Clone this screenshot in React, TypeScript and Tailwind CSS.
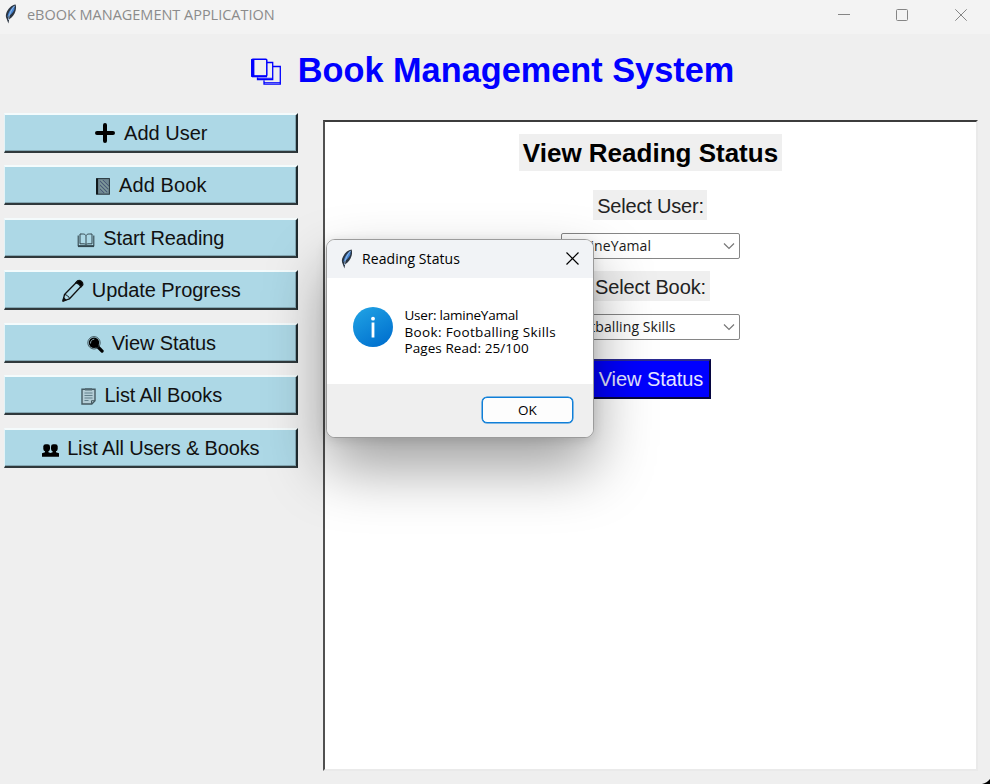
import React from "react";

const ARIAL = "font-['Liberation_Sans',Arial,sans-serif]";
const SEGOE = "font-['Open_Sans','Noto_Sans',sans-serif]";

function Feather({ className }: { className: string }) {
  return (
    <svg viewBox="0 0 12 20" className={className}>
      <path d="M10.6.6C6.500 1 2.700 5.200 1.200 9.500c-.6 2-.4 3.800.4 5.300L3.400 19.400l.8-4.200c3-1.300 5.300-4.700 6.400-8.400.6-2.400.6-4.600 0-6.200Z" fill="#2b3542" />
      <path d="M9.800 1.800C6.600 3.500 3 8 2.400 13.200c3-2 5.800-4.800 6.900-7.400Z" fill="#4585d4" />
      <path d="M9.600 1.800C6.200 5.500 4.200 10 3.400 16" fill="none" stroke="#a9c8ea" strokeWidth=".8" />
    </svg>
  );
}

function BooksIcon() {
  return (
    <svg viewBox="0 0 32 28" className="h-[28px] w-[32px] shrink-0" fill="none" stroke="#0000ff">
      <path d="M17 4.500H22.700V21.700H7.500V19.500M23 8.500H30.300V26.200H14V22.500" strokeWidth="1.300" />
      <path d="M7.500 20.300h15M14 24.700h16" strokeWidth="1" />
      <rect x="1.800" y="1.300" width="15" height="17" rx="1" strokeWidth="1.500" />
      <path d="M2.800 1v18" strokeWidth="3.200" />
      <path d="M2 18.300h15" strokeWidth="2" />
    </svg>
  );
}

function PlusIcon() {
  return (
    <svg viewBox="0 0 20 20" className="h-[20px] w-[20px]">
      <path d="M10 2v16M2 10h16" stroke="#000" strokeWidth="4" strokeLinecap="round" />
    </svg>
  );
}

function NotebookIcon() {
  return (
    <svg viewBox="0 0 14 17" className="mt-[2px] h-[17px] w-[14px]">
      <rect x=".6" y=".6" width="12.800" height="15.600" fill="#6f8792" stroke="#26343a" />
      <path d="M1 .6v15.600" stroke="#10181c" strokeWidth="2.200" />
      <path d="M4 3l8 8M4 7l7 7M7 2l6 6M4 11l4 4" stroke="#4b5b78" strokeWidth="1" />
      <path d="M4 5l8 8M5 2l8 8M4 9l6 6" stroke="#8aa79b" strokeWidth=".6" />
    </svg>
  );
}

function OpenBookIcon() {
  return (
    <svg viewBox="0 0 18 15" className="mt-[5px] h-[15px] w-[18px]" fill="none" stroke="#32464e">
      <path d="M9 2.500C8 1.200 7 1 5.500 1H3V10.800H6c1.500 0 2.500.2 3 .9.500-.7 1.500-.9 3-.9h3V1h-2.500C11 1 10 1.200 9 2.500ZM9 2.500V11.500" strokeWidth="1" />
      <path d="M1.200 2.500V12.800H16.800V2.500" strokeWidth="1.100" />
      <path d="M1 13.300h16" strokeWidth="1.600" />
    </svg>
  );
}

function PencilIcon() {
  return (
    <svg viewBox="0 0 22 23" className="h-[23px] w-[22px]" fill="none" stroke="#111" strokeWidth="1.300" strokeLinejoin="round">
      <path d="M1 22l1.500-6.500L15.500 2.200c1.500-1 4.800 1.600 4.600 4L7.500 19.800Z" />
      <path d="M2.500 15.500c2 .2 4.700 2 5 4.300" strokeWidth="1" />
      <path d="M13.800 3.800l2-2c2-1.400 5.500 1.500 5 4l-2 2.200c-.5-2-3-4-5-4.200Z" fill="#000" />
      <path d="M1 22l.7-3 2.200 2.200Z" fill="#000" />
    </svg>
  );
}

function MagnifierIcon() {
  return (
    <svg viewBox="0 0 17 17" className="mt-[3px] h-[17px] w-[17px]">
      <path d="M10.500 10.500l4.600 4.600" stroke="#000" strokeWidth="3.200" strokeLinecap="round" />
      <circle cx="7" cy="6.800" r="5.200" fill="#000" />
      <circle cx="7" cy="6.800" r="6.200" fill="none" stroke="#26353b" strokeWidth=".8" />
      <path d="M3.500 7.500C3.400 5 5 3.300 7.300 3.200" fill="none" stroke="#8aa5ae" strokeWidth="1" />
    </svg>
  );
}

function ClipboardIcon() {
  return (
    <svg viewBox="0 0 15 18" className="mt-[2px] h-[18px] w-[15px]" fill="none">
      <path d="M1 2.200h13v11.500L10.800 17H1Z" fill="#b4cdd6" stroke="#455a62" strokeWidth="1.400" />
      <path d="M4 1.200h7v2.300H4Z" fill="#536a73" />
      <path d="M3.500 6h8M3.500 8.500h8M3.500 11h8M3.500 13.500h4" stroke="#62808c" strokeWidth="1" />
      <path d="M10.500 17v-3.300H14" stroke="#455a62" strokeWidth="1" />
    </svg>
  );
}

function UsersIcon() {
  return (
    <svg viewBox="0 0 17 13" className="mt-[6px] h-[13px] w-[17px]" fill="#000">
      <rect x="1.300" y=".2" width="6.700" height="7.300" rx="2.400" />
      <rect x="9" y=".2" width="6.700" height="7.300" rx="2.400" />
      <path d="M3 6h3.400v2.300l2.100.7 2.100-.7V6H14v2.300l3 1V12.800H0V9.300l3-1Z" />
    </svg>
  );
}

const ACTIONS: { label: string; icon: React.ReactNode; layout: string; tracking: string }[] = [
  { label: "Add User", icon: <PlusIcon />, layout: "gap-[9px] pl-[2px]", tracking: "tracking-[0px]" },
  { label: "Add Book", icon: <NotebookIcon />, layout: "gap-[9px] pl-[2px]", tracking: "tracking-[0.1px]" },
  { label: "Start Reading", icon: <OpenBookIcon />, layout: "gap-[8px] pl-[1px]", tracking: "tracking-[-0.1px]" },
  { label: "Update Progress", icon: <PencilIcon />, layout: "gap-[8px] pl-[2px]", tracking: "tracking-[-0.08px]" },
  { label: "View Status", icon: <MagnifierIcon />, layout: "gap-[8px] pl-[2px]", tracking: "tracking-[-0.1px]" },
  { label: "List All Books", icon: <ClipboardIcon />, layout: "gap-[9px] pl-[2px]", tracking: "tracking-[-0.1px]" },
  { label: "List All Users & Books", icon: <UsersIcon />, layout: "gap-[8px] pl-[1px]", tracking: "tracking-[-0.15px]" },
];

function Combo({ value }: { value: string }) {
  return (
    <div className={`flex h-[26px] w-[179px] items-center justify-between rounded-[2px] border border-[#868686] bg-white pr-[4px] pl-[4px] text-[14px] text-[#1a1a1a] ${SEGOE}`}>
      <span className="whitespace-nowrap tracking-[0.08px]">{value}</span>
      <svg viewBox="0 0 12 8" className="h-[8px] w-[12px]" fill="none" stroke="#777" strokeWidth="1.200">
        <path d="M1 1.500l5 5 5-5" />
      </svg>
    </div>
  );
}

function MessageBox() {
  return (
    <div className={`absolute top-[239px] left-[326px] flex h-[199px] w-[268px] flex-col overflow-hidden rounded-[9px] border border-[#9b9b9b] bg-white text-black shadow-[0_30px_60px_rgba(0,0,0,0.38),0_2px_12px_rgba(0,0,0,0.12)] ${SEGOE}`}>
      <div className="flex h-[38px] shrink-0 items-center bg-[#f1f3f6] pr-[14px] pb-[1px] pl-[14px]">
        <Feather className="h-[20px] w-[12px]" />
        <span className="ml-[9px] text-[14px] tracking-[0.08px]">Reading Status</span>
        <svg viewBox="0 0 13 13" className="ml-auto h-[13px] w-[13px]" stroke="#000" strokeWidth="1.200">
          <path d="M.5.5l12 12M12.500.5l-12 12" />
        </svg>
      </div>
      <div className="flex h-[106px] shrink-0 items-start pt-[29px] pl-[26px]">
        <svg viewBox="0 0 40 40" className="h-[40px] w-[40px] shrink-0">
          <defs>
            <linearGradient id="info" x1="0" y1="0" x2=".6" y2="1">
              <stop offset="0" stopColor="#22a5e5" />
              <stop offset="1" stopColor="#0273d0" />
            </linearGradient>
          </defs>
          <circle cx="20" cy="20" r="20" fill="url(#info)" />
          <circle cx="20" cy="11.700" r="1.900" fill="#fff" />
          <path d="M20 15.500v15" stroke="#fff" strokeWidth="2.800" />
        </svg>
        <div className="ml-[11.500px] text-[13.500px] leading-[16.500px] whitespace-nowrap">
          <p className="tracking-[-0.23px]">User: lamineYamal</p>
          <p className="tracking-[0.34px]">Book: Footballing Skills</p>
          <p className="tracking-[0.08px]">Pages Read: 25/100</p>
        </div>
      </div>
      <div className="flex grow items-start justify-end bg-[#efefef] pt-[13px] pr-[20px]">
        <div className="flex h-[26px] w-[91px] items-center justify-center rounded-[5px] border border-[#0f7fd8] bg-[#fdfdfd] pt-[1px] text-[13.500px] shadow-[0_0_0_0.5px_#0f7fd8]">OK</div>
      </div>
    </div>
  );
}

export default function App() {
  return (
    <div className={`relative flex h-[784px] w-[990px] flex-col overflow-hidden bg-[#efefef] ${ARIAL}`}>
      <header className={`flex h-[34px] shrink-0 items-start bg-[#f3f3f3] pl-[5px] ${SEGOE}`}>
        <Feather className="mt-[4px] h-[20px] w-[12px]" />
        <span className="ml-[10px] text-[14.500px] leading-[30px] tracking-[-0.020px] text-[#8b8b8b]">eBOOK MANAGEMENT APPLICATION</span>
        <div className="mt-[9px] mr-[23px] ml-auto flex items-center">
          <svg viewBox="0 0 12 12" className="mr-[46px] h-[12px] w-[12px]" stroke="#858585"><path d="M0 5.500h12" /></svg>
          <svg viewBox="0 0 12 12" className="mr-[47px] h-[12px] w-[12px]" stroke="#858585" fill="none"><rect x=".5" y=".5" width="11" height="11" rx="1" /></svg>
          <svg viewBox="0 0 12 12" className="h-[12px] w-[12px]" stroke="#858585"><path d="M.3.300l11.400 11.400M11.700.3L.3 11.700" /></svg>
        </div>
      </header>

      <div className="flex h-[78.700px] shrink-0 items-center justify-center gap-[16px] pr-[6px] pb-[6px]">
        <div className="pt-[3px]"><BooksIcon /></div>
        <h1 className="text-[34.300px] leading-none font-bold whitespace-nowrap text-[#0000ff]">Book Management System</h1>
      </div>

      <main className="flex grow pl-[4px]">
        <nav className="flex w-[293.600px] shrink-0 flex-col gap-[12.500px]">
          {ACTIONS.map((a) => (
            <button
              key={a.label}
              className={`flex h-[40px] w-full shrink-0 items-center justify-center border-t-2 border-r-2 border-b-2 border-l border-t-[#f4fbfc] border-r-[#1f2a2e] border-b-[#30393c] border-l-[#e3f3f7] bg-[#add8e6] text-[20px] text-[#111] shadow-[inset_-1px_-1px_0_#83a7b3] ${a.layout}`}
            >
              {a.icon}
              <span className={`whitespace-nowrap ${a.tracking}`}>{a.label}</span>
            </button>
          ))}
        </nav>

        <section className="mt-[7px] ml-[25.400px] flex h-[651px] w-[655px] flex-col items-center border-2 border-t-[#3c3c3c] border-r-[#eaeaea] border-b-[#eaeaea] border-l-[#505050] bg-white">
          <h2 className="mt-[12px] flex h-[37px] w-[263px] items-center justify-center bg-[#efefef] pt-[2px] text-[26px] font-bold whitespace-nowrap text-black">View Reading Status</h2>
          <div className="mt-[19.300px] flex h-[30px] w-[114px] items-center justify-center bg-[#efefef] pt-[2px] text-[20px] tracking-[-0.2px] whitespace-nowrap text-[#222]">Select User:</div>
          <div className="mt-[13px]"><Combo value="lamineYamal" /></div>
          <div className="mt-[12px] flex h-[30px] w-[119px] items-center justify-center bg-[#efefef] pt-[2px] text-[20px] tracking-[-0.1px] whitespace-nowrap text-[#222]">Select Book:</div>
          <div className="mt-[13px]"><Combo value="Footballing Skills" /></div>
          <button className="mt-[19px] flex h-[40px] w-[121px] items-center justify-center border-2 border-t-[#2a2a90] border-r-[#060640] border-b-[#060640] border-l-[#eeeeff] bg-[#0000ff] pl-[1px] text-[20px] tracking-[-0.05px] whitespace-nowrap text-[#e6e6ff]">View Status</button>
        </section>
      </main>

      <MessageBox />

      <svg viewBox="0 0 8 5" className="absolute right-0 bottom-0 h-[5px] w-[8px]"><path d="M8 0V5H0Q5 4 8 0Z" fill="#000" /></svg>
    </div>
  );
}
